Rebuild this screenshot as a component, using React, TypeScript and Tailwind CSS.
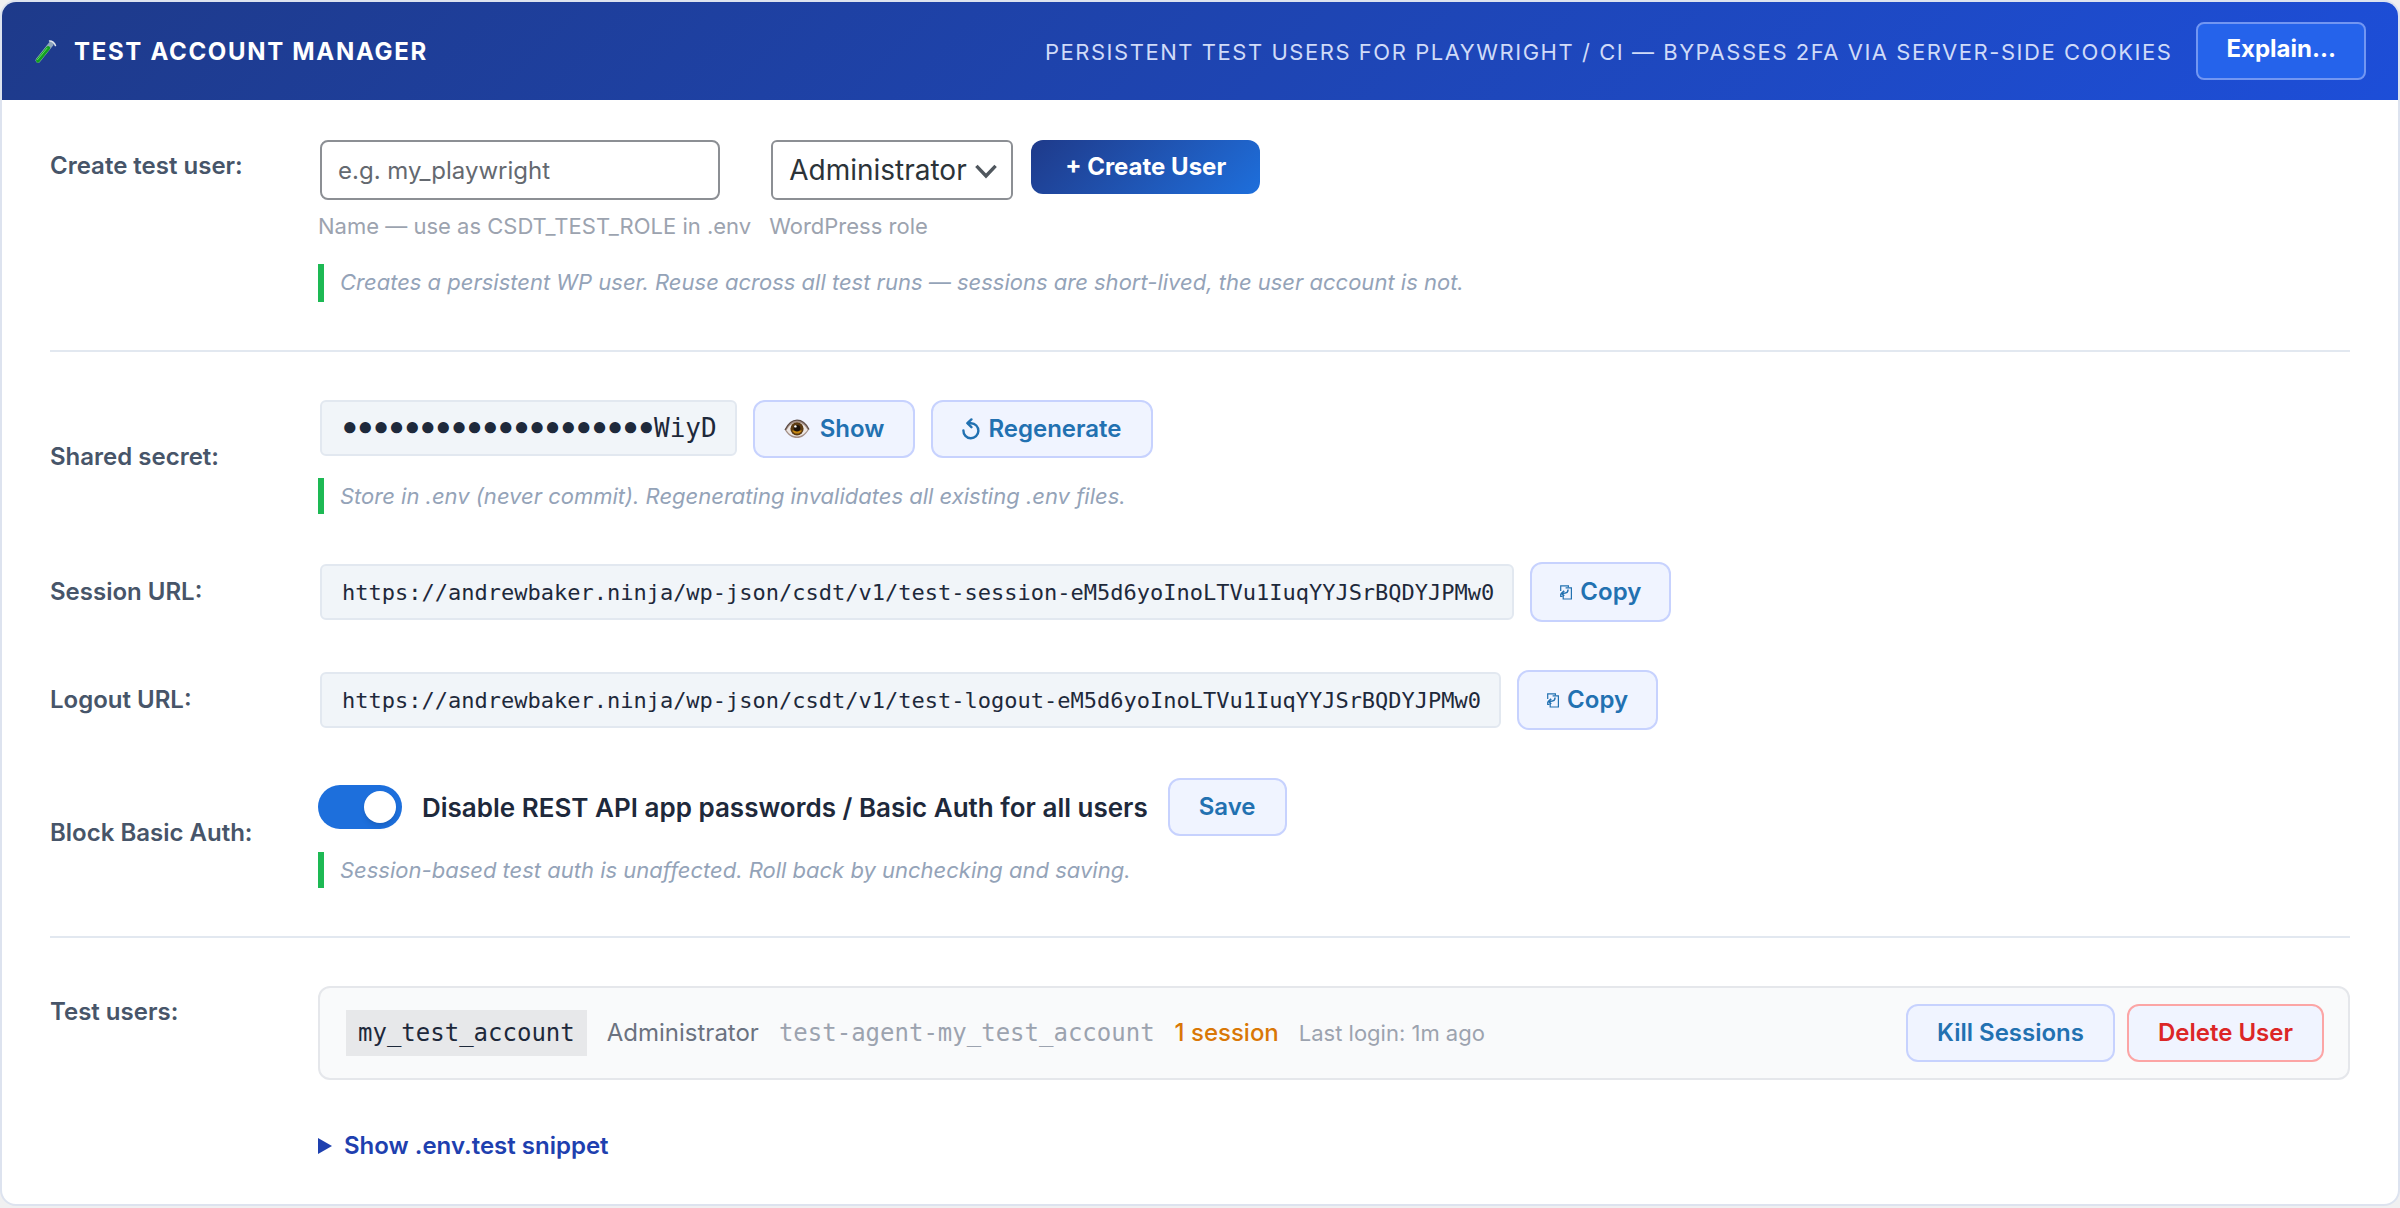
import React, { useState } from 'react';

const SITE = 'https://andrewbaker.ninja/wp-json/csdt/v1';
const TOKEN = 'eM5d6yoInoLTVu1IuqYYJSrBQDYJPMw0';

const URLS = [
  { id: 'session-url', label: 'Session URL:', value: `${SITE}/test-session-${TOKEN}` },
  { id: 'logout-url', label: 'Logout URL:', value: `${SITE}/test-logout-${TOKEN}` },
];

const TestTubeIcon = () => (
  <svg width="24" height="26" viewBox="0 0 24 26" aria-hidden="true">
    <path d="M17.4 4.6 L4 21.4" stroke="#8fa6bd" strokeWidth="5" strokeLinecap="round" />
    <path d="M14.2 9 L4 21.6" stroke="#12a01f" strokeWidth="4" strokeLinecap="round" />
    <path d="M13 9.2 L3.4 20.8" stroke="#5fd868" strokeWidth="1" strokeLinecap="round" />
    <path d="M15.6 2 C17.8 1.8 20.6 4 21.4 6.4" fill="none" stroke="#dfe5ec" strokeWidth="1.6" strokeLinecap="round" />
  </svg>
);

const EyeIcon = () => (
  <svg className="mr-0.5" width="26" height="20" viewBox="0 0 26 20" aria-hidden="true">
    <path d="M1 11 C5 3 9 1.2 13 1.2 C18 1.2 22 4.5 25 10.5 C21.5 16.5 17.5 19 13 19 C8 19 4 16.5 1 11 Z" fill="#a48f86" />
    <path d="M2.4 11.2 C6 5.5 9 3.6 13 3.6 C17.4 3.6 20.6 6 23.6 10.7 C20.4 15.4 17 17.4 13 17.4 C8.6 17.4 5.2 15.4 2.4 11.2 Z" fill="#ece6e3" />
    <circle cx="13" cy="9.8" r="6.6" fill="#5b3a12" />
    <path d="M8 11.4 A5.6 5.6 0 0 0 18 11.4 Z" fill="#c98a12" />
    <circle cx="13" cy="9.2" r="3.3" fill="#1c120a" />
    <circle cx="11.4" cy="7.4" r="1.2" fill="#ffffff" />
    <path d="M1 11 C5 3 9 1.2 13 1.2 C18 1.2 22 4.5 25 10.5" fill="none" stroke="#5d4c46" strokeWidth="1.3" />
  </svg>
);

const RegenerateIcon = () => (
  <svg width="18" height="22" viewBox="0 0 18 22" fill="none" stroke="currentColor" strokeWidth="2.4" strokeLinecap="round" strokeLinejoin="round" aria-hidden="true">
    <path d="M1.4 12.4 A7.5 7.5 0 1 0 9 5.2 L6 5.2" />
    <path d="M9.4 1.4 L5.4 5.2 L9.4 9.2" />
  </svg>
);

const CopyIcon = () => (
  <svg width="12" height="15" viewBox="0 0 12 15" fill="none" stroke="currentColor" strokeWidth="1.2" aria-hidden="true">
    <path d="M0.7 6 V0.8 H8.4 V2.6" />
    <path d="M0.7 9 V11.4 H2.6" />
    <path d="M5.6 2.8 H11.4 V14 H3.2 V10.6" />
    <path d="M7.8 4.6 C8.6 7 7 8.4 2 8.4" strokeWidth="1.6" />
    <path d="M4.2 5.8 L1.4 8.4 L4.2 10.8" strokeWidth="1.6" />
  </svg>
);

const Hint: React.FC<{ className?: string; children: React.ReactNode }> = ({ className = '', children }) => (
  <p className={`border-l-6 border-[#1db954] pl-4 text-[22px] leading-9 text-[#94a3b8] italic ${className}`}>{children}</p>
);

const CodeBox: React.FC<{ id: string; className?: string; children: React.ReactNode }> = ({ id, className, children }) => (
  <code
    id={id}
    className={`ml-0.5 flex h-14 items-center rounded-md border-2 border-[#e2e8f0] bg-[#f1f5f9] pr-[18px] pl-5 font-['DejaVu_Sans_Mono',monospace] text-[#1e293b] ${className}`}
  >
    {children}
  </code>
);

const OutlineButton: React.FC<{ danger?: boolean; tall?: boolean; onClick?: () => void; children: React.ReactNode }> = ({
  danger,
  tall,
  onClick,
  children,
}) => (
  <button
    type="button"
    onClick={onClick}
    className={`flex items-center gap-2 rounded-xl border-2 bg-[#f0f4ff] text-2xl font-semibold whitespace-nowrap ${tall ? 'h-15 px-7' : 'h-[58px] px-[29px]'} ${danger ? 'border-[#fca5a5] text-[#dc2626]' : 'border-[#c7d2fe] text-[#2271b1]'}`}
  >
    {children}
  </button>
);

const Row: React.FC<{ label?: React.ReactNode; top?: boolean; children: React.ReactNode }> = ({ label, top, children }) => (
  <div className={`flex ${top ? 'items-start' : 'items-center'}`}>
    <div className={`w-[268px] shrink-0 text-2xl leading-9 font-semibold text-[#475569] ${top ? 'pt-2' : ''}`}>{label}</div>
    <div className="min-w-0 flex-1">{children}</div>
  </div>
);

const App: React.FC = () => {
  const [shown, setShown] = useState(false);
  const [blocked, setBlocked] = useState(true);
  const [snippetOpen, setSnippetOpen] = useState(false);

  return (
    <div className="min-h-screen bg-[#f0f0f1] font-[Inter,sans-serif]">
      <div className="overflow-hidden rounded-2xl border-2 border-[#dde3ef] bg-white">
        <header className="flex h-[98px] items-center gap-6 bg-linear-135 from-[#1e3a8a] to-[#1d4ed8] px-8">
          <h2 className="flex items-center gap-4 pt-0.5 text-2xl font-bold tracking-[0.07em] text-white uppercase">
            <TestTubeIcon />
            Test Account Manager
          </h2>
          <span className="ml-auto pt-0.5 text-[22px] tracking-[0.07em] text-[#d0dbf8] uppercase">
            Persistent test users for Playwright / CI — bypasses 2FA via server-side cookies
          </span>
          <button type="button" className="h-[58px] rounded-lg border-2 border-[#7296f2] bg-[#2563eb] px-7 pb-1 text-2xl font-bold text-white">
            Explain...
          </button>
        </header>

        <main className="flex flex-col gap-12 px-12 py-10">
          <Row top label={<label htmlFor="test-name">Create test user:</label>}>
            <div className="flex items-start gap-[18px]">
              <div>
                <input
                  id="test-name"
                  type="text"
                  placeholder="e.g. my_playwright"
                  className="ml-0.5 block h-15 w-[400px] rounded-lg border-2 border-[#8c8f94] px-4 text-2xl text-[#2c3338] placeholder:text-[#646970]"
                />
                <p className="mt-2 text-[22px] leading-9 text-[#9ca3af]">Name — use as CSDT_TEST_ROLE in .env</p>
              </div>
              <div>
                <div className="relative ml-0.5">
                  <select id="test-role" aria-label="WordPress role" className="block h-15 w-[242px] appearance-none rounded-md border-2 border-[#8c8f94] bg-white pl-4 text-[28px] text-[#2c3338]">
                    <option>Administrator</option>
                    <option>Editor</option>
                    <option>Subscriber</option>
                  </select>
                  <svg className="pointer-events-none absolute top-6 right-4" width="22" height="15" viewBox="0 0 22 15" fill="none" stroke="#50575e" strokeWidth="3.4" aria-hidden="true">
                    <path d="M1.4 1.8 L11 12 L20.6 1.8" />
                  </svg>
                </div>
                <label htmlFor="test-role" className="mt-2 block text-[22px] leading-9 text-[#9ca3af]">
                  WordPress role
                </label>
              </div>
              <button type="button" className="h-[54px] rounded-xl bg-linear-135 from-[#1e3a8a] to-[#1d6fdc] px-[34px] text-2xl font-bold text-white">
                + Create User
              </button>
            </div>
            <div className="mt-5">
              <Hint className="pb-0.5">Creates a persistent WP user. Reuse across all test runs — sessions are short-lived, the user account is not.</Hint>
            </div>
          </Row>

          <hr className="border-t-2 border-[#e2e8f0]" />

          <Row label="Shared secret:">
            <div className="flex items-start gap-4">
              <CodeBox id="secret" className="text-[26px]">
                <span className="font-['Liberation_Mono',monospace]">{'●'.repeat(20)}</span>
                WiyD
              </CodeBox>
              <OutlineButton onClick={() => setShown(!shown)}>
                <EyeIcon />
                {shown ? 'Hide' : 'Show'}
              </OutlineButton>
              <OutlineButton>
                <RegenerateIcon />
                Regenerate
              </OutlineButton>
            </div>
            <div className="mt-5">
              <Hint>Store in .env (never commit). Regenerating invalidates all existing .env files.</Hint>
            </div>
          </Row>

          {URLS.map((url) => (
            <Row key={url.id} label={url.label}>
              <div className="flex items-center gap-4">
                <CodeBox id={url.id} className="text-[22px]">
                  {url.value}
                </CodeBox>
                <OutlineButton tall onClick={() => navigator.clipboard.writeText(url.value)}>
                  <CopyIcon />
                  Copy
                </OutlineButton>
              </div>
            </Row>
          ))}

          <Row label="Block Basic Auth:">
            <div className="flex items-center gap-5">
              <label className="flex cursor-pointer items-center gap-5">
                <input type="checkbox" checked={blocked} onChange={(e) => setBlocked(e.target.checked)} className="peer sr-only" />
                <span className="flex h-11 w-[84px] items-center rounded-full bg-[#cbd5e1] px-1.5 peer-checked:justify-end peer-checked:bg-[#1d6fdc]">
                  <span className="size-8 rounded-full bg-white shadow-md" />
                </span>
                <span className="text-[26px] font-semibold text-[#1e293b]">Disable REST API app passwords / Basic Auth for all users</span>
              </label>
              <OutlineButton>Save</OutlineButton>
            </div>
            <div className="mt-4">
              <Hint>Session-based test auth is unaffected. Roll back by unchecking and saving.</Hint>
            </div>
          </Row>

          <hr className="border-t-2 border-[#e2e8f0]" />

          <Row top label="Test users:">
            <div className="flex h-[94px] items-center gap-5 rounded-xl border-2 border-[#e5e7eb] bg-[#f9fafb] pr-6 pl-[26px]">
              <code className="flex h-[46px] items-center bg-[#e7e8ea] px-3 font-['DejaVu_Sans_Mono',monospace] text-2xl text-[#1e293b]">my_test_account</code>
              <span className="text-2xl text-[#6b7280]">Administrator</span>
              <span className="font-['DejaVu_Sans_Mono',monospace] text-2xl text-[#9ca3af]">test-agent-my_test_account</span>
              <span className="text-2xl font-medium text-[#d97706]">1 session</span>
              <span className="text-[22px] text-[#9ca3af]">Last login: 1m ago</span>
              <div className="ml-auto flex gap-3">
                <OutlineButton>Kill Sessions</OutlineButton>
                <OutlineButton danger>Delete User</OutlineButton>
              </div>
            </div>
          </Row>

          <Row>
            <details className="group" onToggle={(e) => setSnippetOpen(e.currentTarget.open)}>
              <summary className="flex cursor-pointer list-none items-center gap-3 text-2xl leading-9 font-semibold text-[#1e40af]">
                <svg className="group-open:rotate-90" width="14" height="16" viewBox="0 0 14 16" fill="currentColor" aria-hidden="true">
                  <path d="M0 0 L14 8 L0 16 Z" />
                </svg>
                Show .env.test snippet
              </summary>
              {snippetOpen && (
                <pre className="mt-4 font-['DejaVu_Sans_Mono',monospace] text-[22px]">{`CSDT_TEST_SESSION_URL=${URLS[0].value}`}</pre>
              )}
            </details>
          </Row>
        </main>
      </div>
    </div>
  );
};

export default App;
